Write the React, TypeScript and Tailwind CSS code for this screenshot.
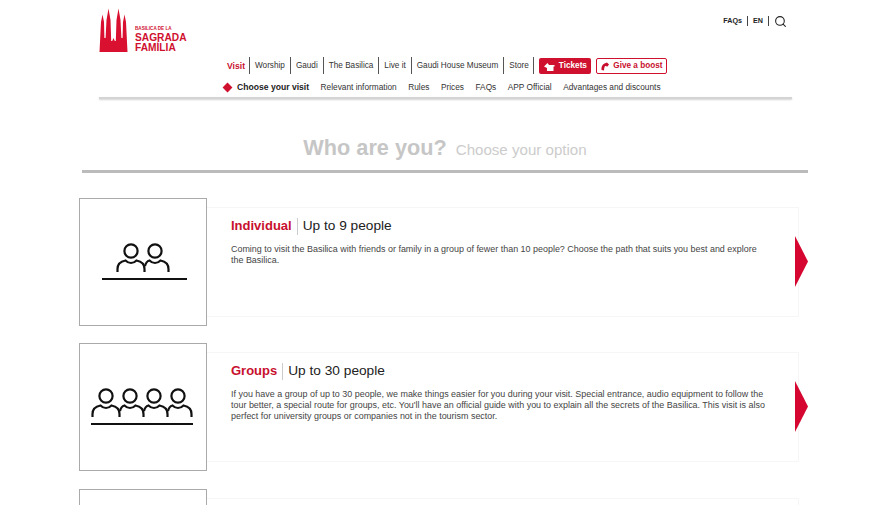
import React from 'react';
import { Search } from 'lucide-react';

const mainNav = ['Worship', 'Gaudi', 'The Basilica', 'Live it', 'Gaudi House Museum', 'Store'];
const subNav = ['Relevant information', 'Rules', 'Prices', 'FAQs', 'APP Official', 'Advantages and discounts'];

function Logo() {
  return (
    <svg width="29" height="44" viewBox="0 0 29 44" className="block">
      <path
        fill="#d9102f"
        d="M0.5 44 L2 14 L3.5 6.5 L5 14 L5.4 30 L6.6 30 L7.5 12 L9.5 0.5 L11.5 12 L12.2 33 L13.2 33 L14.5 30 L15.8 33 L16.8 33 L17.5 12 L19.5 0.5 L21.5 12 L22.4 30 L23.6 30 L24 14 L25.5 6.5 L27 14 L28.5 44 Z"
      />
    </svg>
  );
}

function Person({ cx, first }: { cx: number; first: boolean }) {
  // later figures start their shoulder on the neighbour's arm
  const shoulder = first
    ? `M${cx - 13.5} 74 v-3 q0-7 8-8.5`
    : `M${cx - 10} 68 q1-4.5 4.5-5.5`;
  return (
    <>
      <circle cx={cx} cy="53" r="6.6" fill="none" stroke="#111" strokeWidth="2.2" />
      <path
        d={`${shoulder} q2.5 2.5 5.5 2.5 t5.5-2.5 q8 1.5 8 8.5 v3`}
        fill="none"
        stroke="#111"
        strokeWidth="2.2"
      />
    </>
  );
}

function PeopleIcon({ heads, x1, x2 }: { heads: number[]; x1: number; x2: number }) {
  return (
    <svg width="126" height="126" viewBox="1 1 126 126" className="block">
      {heads.map((cx, i) => (
        <Person key={cx} cx={cx} first={i === 0} />
      ))}
      <path d={`M${x1} 81 H${x2}`} stroke="#111" strokeWidth="2.2" />
    </svg>
  );
}

function OptionCard({
  title,
  people,
  lines,
  heads,
  x1,
  x2,
}: {
  title: string;
  people: string;
  lines: string[];
  heads: number[];
  x1: number;
  x2: number;
}) {
  return (
    <div className="flex h-[128px] w-[729px] relative">
      <div className="w-[128px] h-[128px] shrink-0 border border-[#aaaaaa] bg-white">
        <PeopleIcon heads={heads} x1={x1} x2={x2} />
      </div>
      <div className="mt-[9px] h-[110px] w-[592px] border border-l-0 border-[#f6f6f6] pl-[24px] pt-[9px]">
        <div className="flex items-center h-[18px]">
          <span className="text-[13px] font-bold text-[#c8102e]">{title}</span>
          <span className="mx-[5px] h-[17px] w-px bg-[#cccccc]" />
          <span className="text-[13.7px] text-[#222222]">{people}</span>
        </div>
        <div className="mt-[9px] text-[8.95px] leading-[11px] text-[#444444]">
          {lines.map((l) => (
            <div key={l} className="whitespace-nowrap">
              {l}
            </div>
          ))}
        </div>
      </div>
      <div className="absolute left-[716px] top-[38px] h-[51px] w-[13px] bg-[#d5062f] [clip-path:polygon(0_0,100%_50%,0_100%)]" />
    </div>
  );
}

export default function App() {
  return (
    <div className="w-[892px] h-[505px] overflow-hidden bg-white font-['Liberation_Sans',Arial,sans-serif] text-[#333333]">
      <header className="ml-[99px] w-[693px] h-[99px] flex flex-col">
        <div className="flex h-[97px]">
          <div className="w-[124px] shrink-0 flex pt-[8px]">
            <Logo />
            <div className="ml-[7px] pt-[17px] text-[#d0102f] font-bold">
              <div className="text-[4.6px] leading-[7px] whitespace-nowrap">BASILICA DE LA</div>
              <div className="text-[10.2px] leading-[11px] whitespace-nowrap">SAGRADA</div>
              <div className="text-[10.2px] leading-[10px] whitespace-nowrap">FAMÍLIA</div>
            </div>
          </div>
          <div className="flex-1 flex flex-col">
            <div className="h-[57px] flex justify-end items-start pt-[15px] pr-[5px] text-[7.2px] font-bold text-[#222222]">
              <span className="leading-[12px]">FAQs</span>
              <span className="mx-[5px] h-[10px] w-px bg-[#444444] mt-[1px]" />
              <span className="leading-[12px]">EN</span>
              <span className="ml-[5px] mr-[5px] h-[10px] w-px bg-[#444444] mt-[1px]" />
              <Search size={13} strokeWidth={2} className="text-[#222222]" />
            </div>
            <nav className="h-[17px] flex items-center pl-[4px] text-[8.2px]">
              <span className="pt-[2px] font-bold text-[#c8102e] text-[8.6px]">Visit</span>
              {mainNav.map((item) => (
                <React.Fragment key={item}>
                  <span className="mx-[4px] h-[17px] w-px bg-[#555555]" />
                  <span className="pt-[2px] px-px whitespace-nowrap">{item}</span>
                </React.Fragment>
              ))}
              <span className="ml-[3.6px] mr-[5px] h-[17px] w-px bg-[#555555]" />
              <span className="pt-[2px] h-[16px] w-[52px] rounded-[2px] bg-[#d0102f] text-white font-bold flex items-center justify-center gap-[4px]">
                <svg width="11" height="8" viewBox="0 0 11 8">
                  <path fill="#fff" d="M0 3.5 L3.5 0 L5 2 H10.5 V3.5 H9.5 V8 H3 V5 Z" />
                </svg>
                Tickets
              </span>
              <span className="pt-[2px] ml-[5px] h-[16px] w-[71px] rounded-[2px] border border-[#d0102f] text-[#c8102e] font-bold flex items-center justify-center gap-[4px] whitespace-nowrap">
                <svg width="8" height="9" viewBox="0 0 8 9">
                  <path fill="#c8102e" d="M0.5 8 Q0 3 3.5 1.5 L6 0.5 L8 2.5 L6.5 4.5 L4 4 Q3 5.5 3 8.5 Z" />
                </svg>
                Give a boost
              </span>
            </nav>
            <nav className="mt-[5px] h-[17px] flex items-center text-[8.3px] whitespace-nowrap">
              <span className="h-[7px] w-[7px] ml-[1px] rotate-45 bg-[#d0102f]" />
              <span className="ml-[6px] font-bold text-[#222222] text-[8.6px]">Choose your visit</span>
              {subNav.map((item) => (
                <span key={item} className="ml-[11.5px]">
                  {item}
                </span>
              ))}
            </nav>
          </div>
        </div>
        <div className="h-[2px] bg-[#d4d4d4] shadow-[0_1px_2px_rgba(0,0,0,0.18)]" />
      </header>

      <div className="ml-[82px] w-[726px] h-[74px] border-b-[3px] border-[#bbbbbb] flex items-baseline justify-center pt-[33px]">
        <span className="text-[21.7px] leading-[32px] font-bold text-[#c6c6c6]">Who are you?</span>
        <span className="ml-[9px] text-[15.1px] leading-[32px] text-[#cccccc]">Choose your option</span>
      </div>

      <main className="ml-[79px] mt-[25px] flex flex-col gap-[17px]">
        <OptionCard
          title="Individual"
          people="Up to 9 people"
          heads={[52, 76]}
          x1={23}
          x2={108}
          lines={[
            'Coming to visit the Basilica with friends or family in a group of fewer than 10 people? Choose the path that suits you best and explore',
            'the Basilica.',
          ]}
        />
        <OptionCard
          title="Groups"
          people="Up to 30 people"
          heads={[27, 51, 75, 99]}
          x1={12}
          x2={114}
          lines={[
            'If you have a group of up to 30 people, we make things easier for you during your visit. Special entrance, audio equipment to follow the',
            "tour better, a special route for groups, etc. You'll have an official guide with you to explain all the secrets of the Basilica. This visit is also",
            'perfect for university groups or companies not in the tourism sector.',
          ]}
        />
        <div className="flex h-[128px] mt-px">
          <div className="w-[128px] h-[128px] border border-[#aaaaaa]" />
          <div className="mt-[9px] h-[110px] w-[592px] border border-l-0 border-[#f6f6f6]" />
        </div>
      </main>
    </div>
  );
}
